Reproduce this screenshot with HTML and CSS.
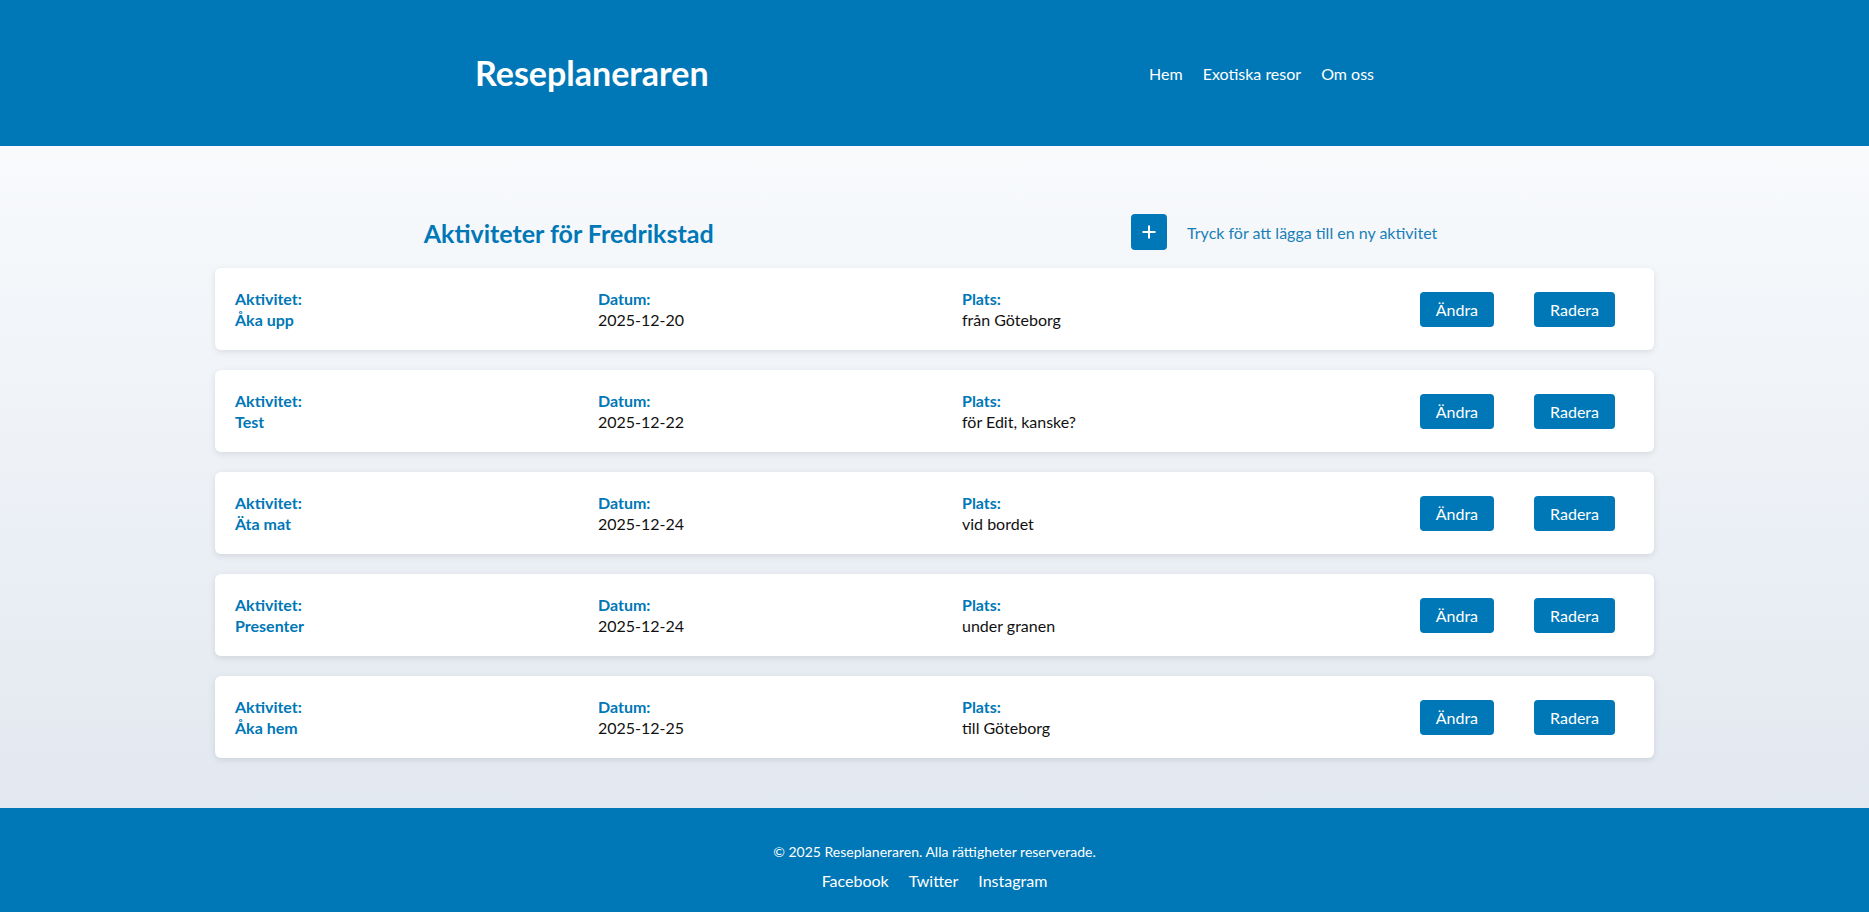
FILE: index.html
```html
<!DOCTYPE html>
<html lang="sv">
<head>
<meta charset="utf-8">
<title>Reseplaneraren</title>
<link rel="stylesheet" href="styles.css">
</head>
<body>
<header class="site-header">
  <div class="logo">Reseplaneraren</div>
  <nav>
    <ul class="nav-list">
      <li><a href="#">Hem</a></li>
      <li><a href="#">Exotiska resor</a></li>
      <li><a href="#">Om oss</a></li>
    </ul>
  </nav>
</header>
<main class="main">
  <div class="container">
    <div class="title-row">
      <h2 class="page-title">Aktiviteter för Fredrikstad</h2>
      <div class="add">
        <button class="add-btn" aria-label="Lägg till">
          <svg width="16" height="16" viewBox="0 0 16 16"><path d="M8 1.5v13M1.5 8h13" stroke="#fff" stroke-width="2" fill="none"/></svg>
        </button>
        <span class="add-text">Tryck för att lägga till en ny aktivitet</span>
      </div>
    </div>
    <div class="cards">
      <div class="card">
        <div class="field"><div class="label">Aktivitet:</div><div class="value strong">Åka upp</div></div>
        <div class="field"><div class="label">Datum:</div><div class="value">2025-12-20</div></div>
        <div class="field"><div class="label">Plats:</div><div class="value">från Göteborg</div></div>
        <div class="actions"><button class="btn">Ändra</button><button class="btn">Radera</button></div>
      </div>
      <div class="card">
        <div class="field"><div class="label">Aktivitet:</div><div class="value strong">Test</div></div>
        <div class="field"><div class="label">Datum:</div><div class="value">2025-12-22</div></div>
        <div class="field"><div class="label">Plats:</div><div class="value">för Edit, kanske?</div></div>
        <div class="actions"><button class="btn">Ändra</button><button class="btn">Radera</button></div>
      </div>
      <div class="card">
        <div class="field"><div class="label">Aktivitet:</div><div class="value strong">Äta mat</div></div>
        <div class="field"><div class="label">Datum:</div><div class="value">2025-12-24</div></div>
        <div class="field"><div class="label">Plats:</div><div class="value">vid bordet</div></div>
        <div class="actions"><button class="btn">Ändra</button><button class="btn">Radera</button></div>
      </div>
      <div class="card">
        <div class="field"><div class="label">Aktivitet:</div><div class="value strong">Presenter</div></div>
        <div class="field"><div class="label">Datum:</div><div class="value">2025-12-24</div></div>
        <div class="field"><div class="label">Plats:</div><div class="value">under granen</div></div>
        <div class="actions"><button class="btn">Ändra</button><button class="btn">Radera</button></div>
      </div>
      <div class="card">
        <div class="field"><div class="label">Aktivitet:</div><div class="value strong">Åka hem</div></div>
        <div class="field"><div class="label">Datum:</div><div class="value">2025-12-25</div></div>
        <div class="field"><div class="label">Plats:</div><div class="value">till Göteborg</div></div>
        <div class="actions"><button class="btn">Ändra</button><button class="btn">Radera</button></div>
      </div>
    </div>
  </div>
</main>
<footer class="site-footer">
  <p class="copy">© 2025 Reseplaneraren. Alla rättigheter reserverade.</p>
  <ul class="social">
    <li><a href="#">Facebook</a></li>
    <li><a href="#">Twitter</a></li>
    <li><a href="#">Instagram</a></li>
  </ul>
</footer>
</body>
</html>
```
FILE: styles.css
```css
* { box-sizing: border-box; }

html, body {
  margin: 0;
  background: #ffffff;
}

body {
  font-family: Lato, "Open Sans", "Noto Sans", sans-serif;
  font-size: 16px;
  color: #111;
}

.site-header {
  height: 146px;
  background: #0077b6;
  color: #fff;
  display: flex;
  align-items: center;
  justify-content: space-between;
  padding: 0 495px 0 475px;
}

.logo {
  font-size: 34px;
  font-weight: 700;
  line-height: 40px;
}

.nav-list {
  list-style: none;
  margin: 0;
  padding: 0;
  display: flex;
  gap: 20px;
}

.nav-list a {
  color: #fff;
  text-decoration: none;
  font-size: 16px;
}

.main {
  background: linear-gradient(to bottom, #f8fafc 0%, #e2e8f0 100%);
  padding: 68px 0 50px;
}

.container {
  width: 1439px;
  margin: 0 auto;
}

.title-row {
  height: 36px;
  margin-bottom: 18px;
  display: flex;
  align-items: center;
  justify-content: space-around;
}

.page-title {
  margin: 0;
  font-size: 25px;
  font-weight: 700;
  color: #0077b6;
  line-height: 30px;
  position: relative;
  top: 1px;
}

.add {
  display: flex;
  align-items: center;
  gap: 20px;
  margin-right: 8px;
}

.add-btn {
  width: 36px;
  height: 36px;
  border: none;
  border-radius: 4px;
  background: #0077b6;
  display: flex;
  align-items: center;
  justify-content: center;
  padding: 0;
}

.add-text {
  color: #1a7fb8;
  font-size: 16px;
}

.cards {
  display: flex;
  flex-direction: column;
  gap: 20px;
}

.card {
  background: #fff;
  border-radius: 6px;
  box-shadow: 0 2px 6px rgba(0, 0, 0, 0.1);
  padding: 20px;
  display: grid;
  grid-template-columns: 363px 364px 1fr auto;
  align-items: center;
  line-height: 21px;
}

.label {
  font-weight: 700;
  color: #0077b6;
}

.value {
  color: #111;
}

.value.strong {
  font-weight: 700;
  color: #0077b6;
}

.actions {
  display: flex;
  gap: 40px;
  margin-right: 19px;
}

.btn {
  height: 35px;
  padding: 0 16px;
  border: none;
  border-radius: 4px;
  background: #0077b6;
  color: #fff;
  font-family: inherit;
  font-size: 16px;
}

.site-footer {
  background: #0077b6;
  color: #fff;
  text-align: center;
  padding: 34px 0 20px;
}

.copy {
  margin: 0 0 8px;
  font-size: 14px;
  line-height: 20px;
}

.social {
  list-style: none;
  margin: 0;
  padding: 0;
  display: flex;
  justify-content: center;
  gap: 20px;
  line-height: 22px;
}

.social a {
  color: #fff;
  text-decoration: none;
  font-size: 16px;
}
```
